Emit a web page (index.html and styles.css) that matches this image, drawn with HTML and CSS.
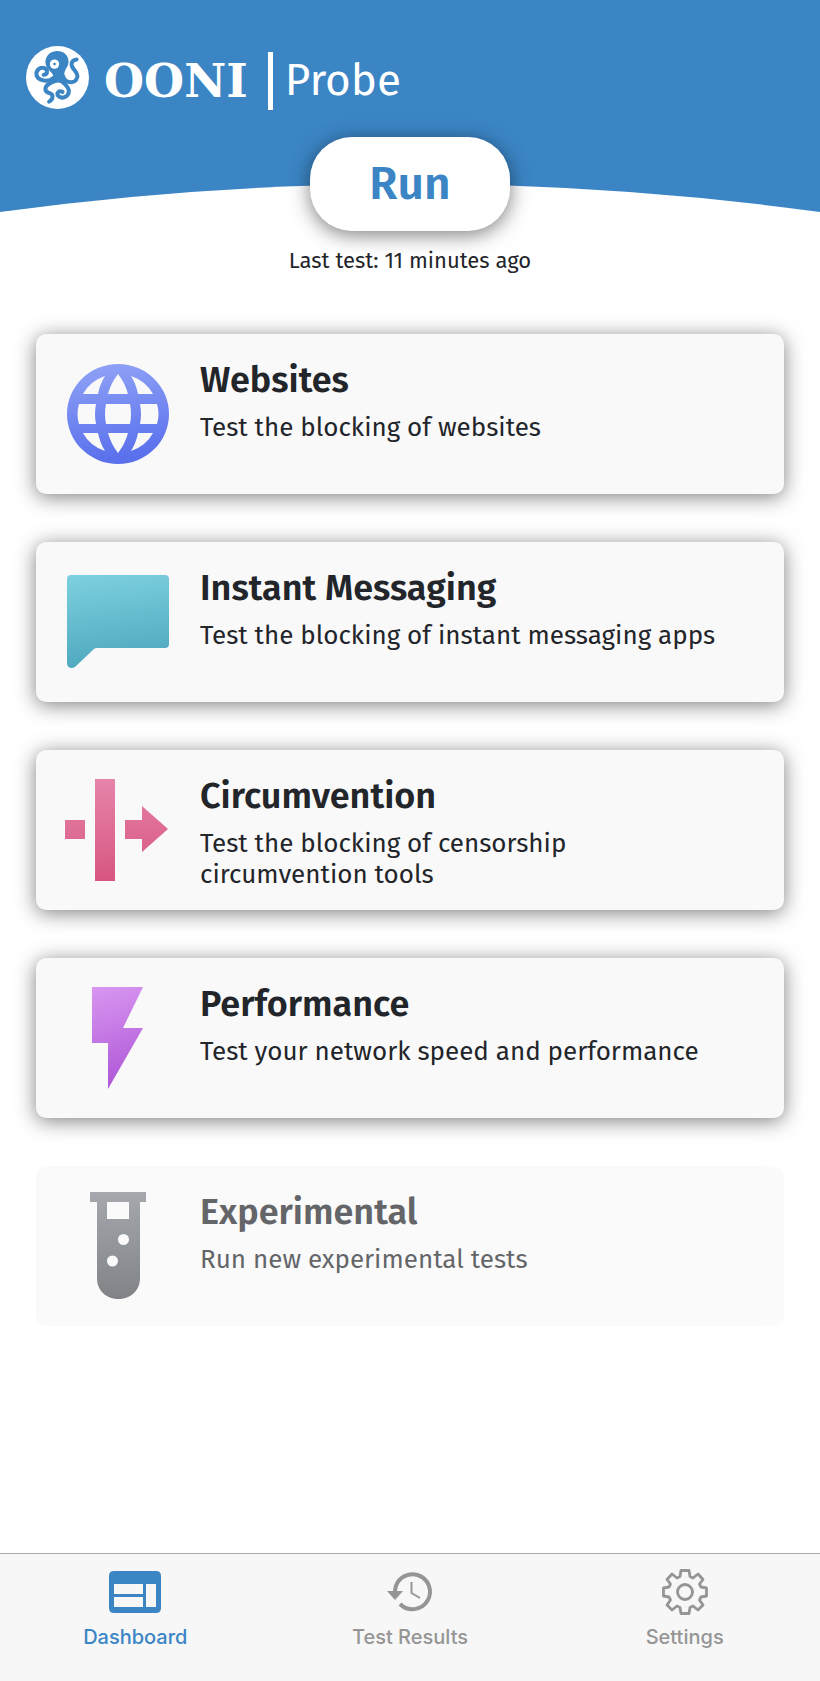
FILE: index.html
```html
<!DOCTYPE html>
<html lang="en">
<head>
<meta charset="utf-8">
<meta name="viewport" content="width=device-width, initial-scale=1">
<title>OONI Probe</title>
<link rel="stylesheet" href="styles.css">
</head>
<body>
<header class="hero">
  <h1 class="brand">
    <svg class="brand-mark" viewBox="78 47 188 188" aria-hidden="true">
      <circle cx="172" cy="141" r="94" fill="#fff"/>
      <g fill="none" stroke="#3b85c5" stroke-width="12" stroke-linecap="round" stroke-linejoin="round">
        <path d="M160 142C146 156 116 152 110 136C106 120 120 108 133 113C144 118 143 132 131 133"/>
        <path d="M188 136C196 160 226 162 231 140C234 124 214 116 214 102C214 94 220 88 229 87"/>
        <path d="M168 150C150 156 134 164 136 178C140 192 160 184 157 200C156 206 152 210 147 213"/>
        <path d="M180 148C192 160 206 166 206 182C205 200 184 206 174 196C168 187 176 179 187 184"/>
      </g>
      <path d="M136 96C136 52 205 50 205 94C205 112 188 118 193 142L198 160L172 156L152 158L160 140C160 124 137 118 136 96Z" fill="#3b85c5"/>
      <circle cx="163" cy="101" r="14" fill="#fff"/>
      <circle cx="163" cy="101" r="4" fill="#3b85c5"/>
    </svg>
    <span class="brand-text">
      <span class="brand-name">OONI</span>
      <span class="brand-product">Probe</span>
    </span>
  </h1>
  <svg class="hero-curve" viewBox="0 0 820 30" preserveAspectRatio="none" aria-hidden="true">
    <path d="M0 30V29Q410 -27 820 29V30Z" fill="#fff"/>
  </svg>
</header>

<main class="main">
  <button class="run" type="button">Run</button>
  <p class="last-test">Last test: 11 minutes ago</p>

  <div class="cards">
    <button class="card" type="button">
      <svg class="card-icon" viewBox="0 0 102 102" aria-hidden="true">
        <defs><linearGradient id="g-web" x1="0" y1="0" x2=".15" y2="1"><stop offset="0" stop-color="#91a4f7"/><stop offset="1" stop-color="#5a70ec"/></linearGradient></defs>
        <path fill="url(#g-web)" fill-rule="evenodd" d="M51 1A51 50 0 1 1 51 101A51 50 0 1 1 51 1ZM51 11Q44 20 41 31H61Q58 20 51 11ZM38 13Q23 18 16 31H31Q33 21 38 13ZM64 13Q69 21 71 31H86Q79 18 64 13ZM12 41Q9 51 12 61H29Q27 51 29 41ZM39 41Q37 51 39 61H63Q65 51 63 41ZM73 41Q75 51 73 61H90Q93 51 90 41ZM16 70Q23 83 38 88Q33 80 31 70ZM41 70Q44 81 51 90Q58 81 61 70ZM71 70Q69 80 64 88Q79 83 86 70Z"/>
      </svg>
      <span class="card-text"><span class="card-title">Websites</span><span class="card-desc">Test the blocking of websites</span></span>
    </button>
    <button class="card" type="button">
      <svg class="card-icon" viewBox="0 0 102 102" aria-hidden="true">
        <defs><linearGradient id="g-im" x1="0" y1="0" x2=".15" y2="1"><stop offset="0" stop-color="#7dd0df"/><stop offset="1" stop-color="#50a9c0"/></linearGradient></defs>
        <path fill="url(#g-im)" d="M4 4H98Q102 4 102 8V73Q102 77 98 77H30Q28 77 27 78L9 95Q7 97 5 97Q0 97 0 92V8Q0 4 4 4Z"/>
      </svg>
      <span class="card-text"><span class="card-title">Instant Messaging</span><span class="card-desc">Test the blocking of instant messaging apps</span></span>
    </button>
    <button class="card" type="button">
      <svg class="card-icon" viewBox="0 0 102 102" aria-hidden="true">
        <defs><linearGradient id="g-cir" gradientUnits="userSpaceOnUse" x1="45" y1="0" x2="55" y2="102"><stop offset="0" stop-color="#e684aa"/><stop offset="1" stop-color="#d75580"/></linearGradient></defs>
        <path fill="url(#g-cir)" d="M-2 41H18V60H-2ZM28 0H48V102H28ZM58 41H75V27L101 50L75 73V60H58Z"/>
      </svg>
      <span class="card-text"><span class="card-title">Circumvention</span><span class="card-desc">Test the blocking of censorship<br>circumvention tools</span></span>
    </button>
    <button class="card" type="button">
      <svg class="card-icon" viewBox="0 0 102 102" aria-hidden="true">
        <defs><linearGradient id="g-perf" x1="0" y1="0" x2=".15" y2="1"><stop offset="0" stop-color="#d897f0"/><stop offset="1" stop-color="#b058d8"/></linearGradient></defs>
        <path fill="url(#g-perf)" d="M25 0H76L56 41H76L41 102V56H25Z"/>
      </svg>
      <span class="card-text"><span class="card-title">Performance</span><span class="card-desc">Test your network speed and performance</span></span>
    </button>
    <button class="card card-disabled" type="button" disabled>
      <svg class="card-icon" viewBox="0 0 102 102" aria-hidden="true">
        <defs><linearGradient id="g-exp" x1="0" y1="0" x2="0" y2="1"><stop offset="0" stop-color="#80848a"/><stop offset="1" stop-color="#4b4f54"/></linearGradient></defs>
        <path fill="url(#g-exp)" fill-rule="evenodd" d="M23 -3H79V7H73V83C73 111 30 111 30 83V7H23ZM40 7V24H62V7ZM56.500 39A5.500 5.500 0 1 0 56.500 50A5.500 5.500 0 1 0 56.500 39ZM45.500 60.500A5.500 5.500 0 1 0 45.500 71.500A5.500 5.500 0 1 0 45.500 60.500Z"/>
      </svg>
      <span class="card-text"><span class="card-title">Experimental</span><span class="card-desc">Run new experimental tests</span></span>
    </button>
  </div>
</main>

<nav class="tabs" aria-label="Main">
  <a class="tab tab-active" href="#dashboard" aria-current="page">
    <svg class="tab-icon" viewBox="0 0 52 48" aria-hidden="true"><path fill="currentColor" fill-rule="evenodd" d="M5 3H47Q52 3 52 8V40Q52 45 47 45H5Q0 45 0 40V8Q0 3 5 3ZM5 16V26H34V16ZM5 29V39H34V29ZM37 16V39H47V16Z"/></svg>
    <span>Dashboard</span>
  </a>
  <a class="tab" href="#results">
    <svg class="tab-icon" viewBox="0 0 52 48" aria-hidden="true">
      <path d="M11 23A17.500 17.500 0 1 1 16 36" fill="none" stroke="currentColor" stroke-width="4"/>
      <path d="M3 23H19L11 32Z" fill="currentColor"/>
      <path d="M27.500 14V25L36 30" fill="none" stroke="currentColor" stroke-width="2"/>
    </svg>
    <span>Test Results</span>
  </a>
  <a class="tab" href="#settings">
    <svg class="tab-icon" viewBox="0 0 52 48" aria-hidden="true">
      <g fill="none" stroke="currentColor" stroke-width="2.800" stroke-linejoin="round">
        <circle cx="26" cy="24" r="7.500"/>
        <path d="M22 2.500H30L31 8.500L34 10L39 6L44 11.500L40.500 16L42 19L47.500 20V28L42 29L40.500 32L44 37L39 42L34 38L31 39.500L30 45.500H22L21 39.500L18 38L13 42L8 37L11.500 32L10 29L4.500 28V20L10 19L11.500 16L8 11.500L13 6L18 10L21 8.500Z"/>
      </g>
    </svg>
    <span>Settings</span>
  </a>
</nav>
</body>
</html>
```
FILE: styles.css
```css
* { box-sizing: border-box; }

body {
  margin: 0;
  min-height: 100vh;
  display: flex;
  flex-direction: column;
  background: #fff;
  color: #22252a;
  font-family: "Fira Sans", "Noto Sans", sans-serif;
}

.hero {
  display: flex;
  flex-direction: column;
  justify-content: space-between;
  height: 213px;
  background: #3b85c5;
  color: #fff;
}

.brand {
  display: flex;
  align-items: flex-start;
  margin: 0;
  padding: 46px 26px 0;
  font-weight: 400;
}

.brand-mark { width: 63px; height: 63px; }

.brand-text {
  display: flex;
  align-items: center;
  padding-top: 6px;
}

.brand-name {
  margin-left: 15px;
  font: bold 46px/58px "DejaVu Serif", serif;
}

.brand-product {
  margin-left: 20px;
  padding-left: 12px;
  border-left: 5px solid #fff;
  font: 400 44px/58px "Fira Sans", "Noto Sans", sans-serif;
}

.hero-curve { display: block; width: 100%; height: 30px; }

.main {
  flex: 1;
  display: flex;
  flex-direction: column;
  align-items: center;
  margin-top: -76px;
}

.run {
  width: 200px;
  height: 94px;
  border: 0;
  border-radius: 42px;
  background: #fff;
  box-shadow: 0 4px 20px rgba(0, 0, 0, 0.5);
  color: #3b85c5;
  font: 600 46px/60px "Fira Sans", "Noto Sans", sans-serif;
}

.last-test {
  margin: 15px 0 0;
  font-size: 22px;
  line-height: 30px;
}

.cards {
  align-self: stretch;
  display: flex;
  flex-direction: column;
  gap: 48px;
  padding: 58px 36px 48px;
}

.card {
  display: flex;
  gap: 31px;
  min-height: 160px;
  padding: 21px 31px 0;
  border: 0;
  border-radius: 10px;
  background: #f9f9f9;
  box-shadow: 0 3px 20px rgba(0, 0, 0, 0.5);
  color: inherit;
  font: inherit;
  text-align: left;
}

.card-icon {
  flex: none;
  width: 102px;
  height: 102px;
  margin-top: 8px;
  overflow: visible;
}

.card-text { display: flex; flex-direction: column; }

.card-title { font-size: 36px; line-height: 50px; font-weight: 600; }

.card-desc { font-size: 26px; line-height: 31px; margin-top: 7px; }

.card-disabled { box-shadow: none; opacity: 0.7; }

.tabs {
  display: grid;
  grid-template-columns: 33fr 34fr 33fr;
  min-height: 128px;
  padding-top: 14px;
  border-top: 1px solid #aaa;
  background: #f7f7f7;
}

.tab {
  display: flex;
  flex-direction: column;
  align-items: center;
  gap: 8px;
  color: #959595;
  font: 500 20px/26px Inter, sans-serif;
  text-decoration: none;
}

.tab-active { color: #3b85c5; }

.tab-icon { width: 52px; height: 48px; }
```
